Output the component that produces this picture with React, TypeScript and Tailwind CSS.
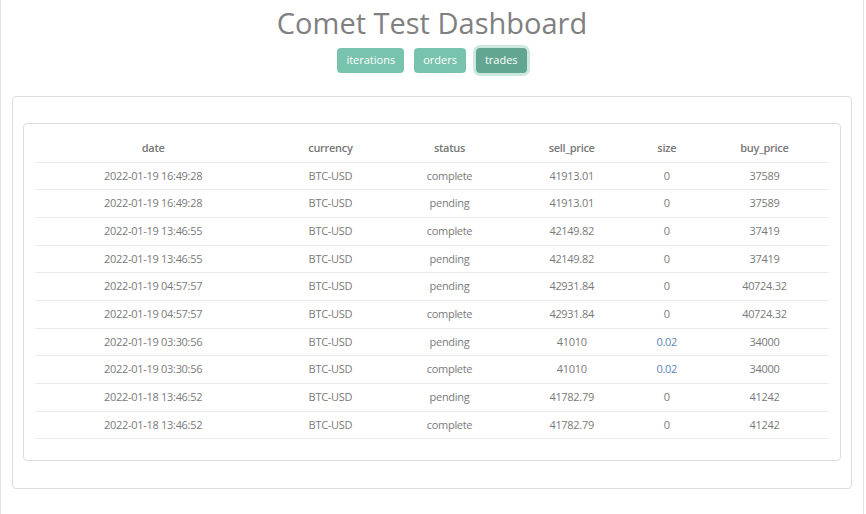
const rows = [
  { date: '2022-01-19 16:49:28', currency: 'BTC-USD', status: 'complete', sell: '41913.01', size: '0', buy: '37589' },
  { date: '2022-01-19 16:49:28', currency: 'BTC-USD', status: 'pending', sell: '41913.01', size: '0', buy: '37589' },
  { date: '2022-01-19 13:46:55', currency: 'BTC-USD', status: 'complete', sell: '42149.82', size: '0', buy: '37419' },
  { date: '2022-01-19 13:46:55', currency: 'BTC-USD', status: 'pending', sell: '42149.82', size: '0', buy: '37419' },
  { date: '2022-01-19 04:57:57', currency: 'BTC-USD', status: 'pending', sell: '42931.84', size: '0', buy: '40724.32' },
  { date: '2022-01-19 04:57:57', currency: 'BTC-USD', status: 'complete', sell: '42931.84', size: '0', buy: '40724.32' },
  { date: '2022-01-19 03:30:56', currency: 'BTC-USD', status: 'pending', sell: '41010', size: '0.02', buy: '34000' },
  { date: '2022-01-19 03:30:56', currency: 'BTC-USD', status: 'complete', sell: '41010', size: '0.02', buy: '34000' },
  { date: '2022-01-18 13:46:52', currency: 'BTC-USD', status: 'pending', sell: '41782.79', size: '0', buy: '41242' },
  { date: '2022-01-18 13:46:52', currency: 'BTC-USD', status: 'complete', sell: '41782.79', size: '0', buy: '41242' },
];

const tabs = ['iterations', 'orders', 'trades'];

export default function App() {
  const active = 'trades';

  return (
    <div className="w-[864px] min-h-[514px] border-x border-[#e2e2e2] bg-white">
      <h1 className="pt-[5px] text-center text-[29px] leading-[36px] text-[#808080] font-['Open_Sans',sans-serif]">
        Comet Test Dashboard
      </h1>

      <div className="mt-[7px] flex justify-center gap-[10px] font-['Open_Sans',sans-serif]">
        {tabs.map((t) => (
          <button
            key={t}
            className={`h-[25px] rounded-[4px] px-[9px] text-[11px] text-white ${
              t === active
                ? 'bg-[#62a590] ring-[3px] ring-[#cde8df]'
                : 'bg-[#78c3ad]'
            }`}
          >
            {t}
          </button>
        ))}
      </div>

      <div className="mx-[11px] mt-[23px] rounded-[4px] border border-[#dcdcdc] px-[10px] pt-[26px] pb-[27px]">
        <div className="rounded-[4px] border border-[#dcdcdc] px-[11px] pt-[11px] pb-[21px]">
          <table className="w-full table-fixed border-collapse font-['Open_Sans',sans-serif] text-[11px] text-[#7a7a7a] tracking-[-0.3px]">
            <colgroup>
              <col className="w-[236px]" />
              <col className="w-[118px]" />
              <col className="w-[120px]" />
              <col className="w-[124px]" />
              <col className="w-[66px]" />
              <col className="w-[129px]" />
            </colgroup>
            <thead>
              <tr className="h-[27px] border-b border-[#ececec]">
                {['date', 'currency', 'status', 'sell_price', 'size', 'buy_price'].map((h) => (
                  <th key={h} className="text-center font-semibold text-[#777]">
                    {h}
                  </th>
                ))}
              </tr>
            </thead>
            <tbody>
              {rows.map((r, i) => (
                <tr key={i} className="h-[27.7px] border-b border-[#ececec]">
                  <td className="text-center">{r.date}</td>
                  <td className="text-center">{r.currency}</td>
                  <td className="text-center">{r.status}</td>
                  <td className="text-center">{r.sell}</td>
                  <td className={`text-center ${r.size === '0.02' ? 'text-[#5d87b3]' : ''}`}>{r.size}</td>
                  <td className="text-center">{r.buy}</td>
                </tr>
              ))}
            </tbody>
          </table>
        </div>
      </div>
    </div>
  );
}
